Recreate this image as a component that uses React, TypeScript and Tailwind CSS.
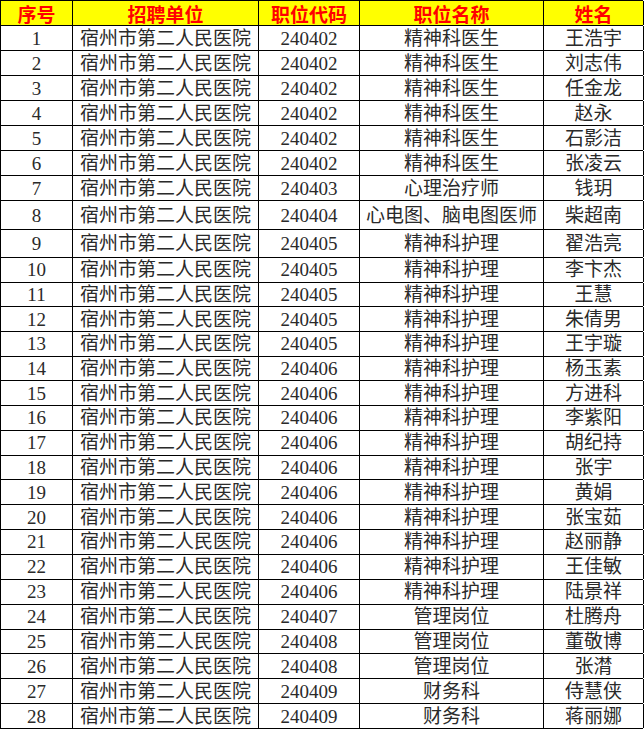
const rows: [string, string, string][] = [
  ["240402", "精神科医生", "王浩宇"],
  ["240402", "精神科医生", "刘志伟"],
  ["240402", "精神科医生", "任金龙"],
  ["240402", "精神科医生", "赵永"],
  ["240402", "精神科医生", "石影洁"],
  ["240402", "精神科医生", "张凌云"],
  ["240403", "心理治疗师", "钱玥"],
  ["240404", "心电图、脑电图医师", "柴超南"],
  ["240405", "精神科护理", "翟浩亮"],
  ["240405", "精神科护理", "李卞杰"],
  ["240405", "精神科护理", "王慧"],
  ["240405", "精神科护理", "朱倩男"],
  ["240405", "精神科护理", "王宇璇"],
  ["240406", "精神科护理", "杨玉素"],
  ["240406", "精神科护理", "方进科"],
  ["240406", "精神科护理", "李紫阳"],
  ["240406", "精神科护理", "胡纪持"],
  ["240406", "精神科护理", "张宇"],
  ["240406", "精神科护理", "黄娟"],
  ["240406", "精神科护理", "张宝茹"],
  ["240406", "精神科护理", "赵丽静"],
  ["240406", "精神科护理", "王佳敏"],
  ["240406", "精神科护理", "陆景祥"],
  ["240407", "管理岗位", "杜腾舟"],
  ["240408", "管理岗位", "董敬博"],
  ["240408", "管理岗位", "张潸"],
  ["240409", "财务科", "侍慧侠"],
  ["240409", "财务科", "蒋丽娜"],
];

const heightFor = (i: number) => {
  if (i === 7) return "h-[29px]";
  if (i === 8) return "h-[28px]";
  if (i >= 9 && i <= 17) return "h-[24.7px]";
  if (i >= 18) return "h-[24.9px]";
  return "h-[25px]";
};

const cols = "grid grid-cols-[72px_186px_101px_184px_100px]";
const cell = "flex items-center justify-center border-r border-black";

export default function App() {
  return (
    <div className="w-[644px] h-[730px] bg-white">
      <div
        className="w-[643px] border-l border-t border-black"
        style={{ fontFamily: '"Liberation Serif", "Noto Sans CJK SC", serif' }}
      >
        <div
          className={`${cols} h-[25px] border-b border-black bg-[#ffff00] text-[#ff0000] font-bold text-[19px] leading-none`}
          style={{ fontFamily: '"Noto Sans CJK SC", serif' }}
        >
          <div className={cell}>序号</div>
          <div className={cell}>招聘单位</div>
          <div className={cell}>职位代码</div>
          <div className={cell}>职位名称</div>
          <div className={cell}>姓名</div>
        </div>
        {rows.map((r, i) => (
          <div
            key={i}
            className={`${cols} ${heightFor(i)} border-b border-black text-[19px] leading-none text-[#2a2a2a]`}
          >
            <div className={cell}>{i + 1}</div>
            <div className={cell}>宿州市第二人民医院</div>
            <div className={cell}>{r[0]}</div>
            <div className={cell}>{r[1]}</div>
            <div className={cell}>{r[2]}</div>
          </div>
        ))}
      </div>
    </div>
  );
}
